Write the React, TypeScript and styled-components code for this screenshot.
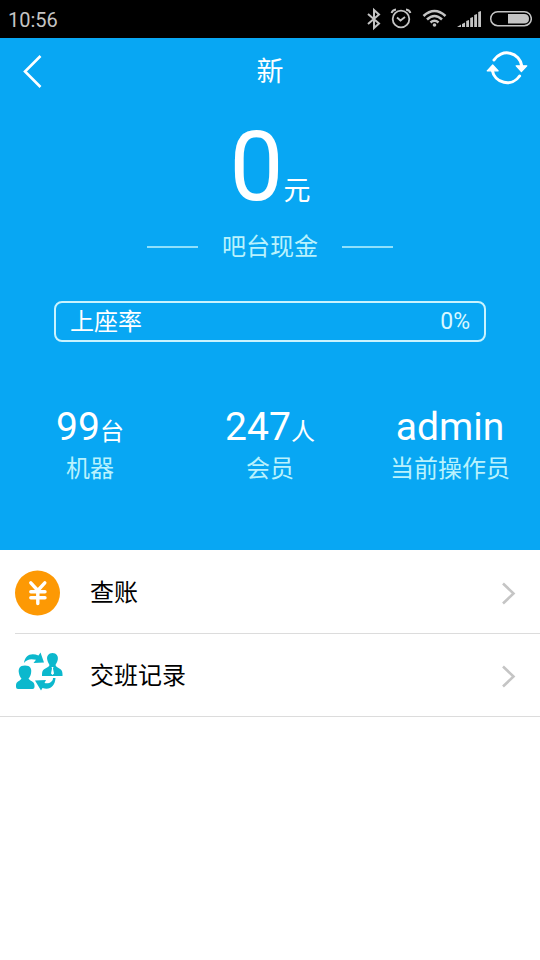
import React from "react";
import styled, { createGlobalStyle } from "styled-components";

const GlobalStyle = createGlobalStyle`
  * { box-sizing: border-box; }
  body {
    margin: 0;
    background: #fff;
    font-family: Roboto, "Noto Sans CJK SC", sans-serif;
  }
`;

const Page = styled.div`
  min-height: 100vh;
  background: #fff;
`;

const StatusBar = styled.div`
  display: flex;
  align-items: center;
  justify-content: space-between;
  height: 38px;
  padding: 2px 8px 0;
  background: #000;
  color: #c4c4c4;
  font-size: 20px;
  line-height: 24px;
`;

const StatusIcons = styled.svg`
  display: block;
`;

const Hero = styled.section`
  padding-bottom: 63px;
  background: #08a7f3;
  color: #fff;
`;

const TitleBar = styled.header`
  display: grid;
  grid-template-columns: 64px 1fr 64px;
  align-items: center;
  height: 64px;
`;

const Title = styled.h1`
  margin: 0;
  padding-top: 4px;
  text-align: center;
  font-size: 27px;
  font-weight: 400;
  line-height: 40px;
`;

const IconButton = styled.button`
  display: flex;
  align-items: center;
  justify-content: center;
  height: 64px;
  padding: 0;
  border: 0;
  background: none;
  color: #fff;
  cursor: pointer;
`;

const Amount = styled.div`
  display: flex;
  align-items: baseline;
  justify-content: center;
  height: 112px;
  margin-top: 9px;
  font-size: 96px;
  line-height: 112px;
`;

const AmountUnit = styled.span`
  font-size: 27px;
  line-height: 32px;
`;

const Caption = styled.div`
  display: flex;
  align-items: center;
  justify-content: center;
  gap: 24px;
  margin-top: 8px;
  color: #b9f2fd;
  font-size: 24px;
  line-height: 32px;

  &::before,
  &::after {
    content: "";
    width: 51px;
    height: 2px;
    background: #8fe0fb;
  }
`;

const Rate = styled.div`
  display: flex;
  align-items: center;
  justify-content: space-between;
  height: 41px;
  margin: 38px 10% 0;
  padding: 0 14px;
  border: 2px solid #c9f3fe;
  border-radius: 8px;
  font-size: 24px;
  line-height: 32px;
`;

const RateValue = styled.span`
  color: #d9f8ff;
  font-size: 23px;
`;

const Stats = styled.div`
  display: grid;
  grid-template-columns: repeat(3, 1fr);
  margin-top: 61px;
  text-align: center;
`;

const StatValue = styled.div`
  display: flex;
  align-items: baseline;
  justify-content: center;
  height: 48px;
  font-size: 39px;
  line-height: 48px;
`;

const StatUnit = styled.span`
  font-size: 24px;
  line-height: 32px;
`;

const StatLabel = styled.div`
  color: #b9f2fd;
  font-size: 24px;
  line-height: 36px;
`;

const Menu = styled.nav`
  border-bottom: 1px solid #dcdcdc;
`;

const MenuRow = styled.a`
  display: flex;
  align-items: center;
  height: 83px;
  margin-left: 15px;
  padding: 2px 24px 0 0;
  color: #000;
  font-size: 24px;
  line-height: 32px;
  text-decoration: none;

  & + & {
    border-top: 1px solid #dcdcdc;
  }
`;

const MenuIcon = styled.svg`
  flex: none;
  margin-right: 26px;
  overflow: visible;
`;

const MenuText = styled.span`
  flex: 1;
`;

function SystemIcons() {
  return (
    <StatusIcons width="166" height="28" viewBox="366 6 166 28" fill="none" stroke="#c4c4c4" aria-hidden="true">
      <path d="M368 14 L379 23.5 L374 28 V10 L379 14.5 L368 24" strokeWidth="2" />
      <circle cx="401" cy="19" r="8.3" strokeWidth="1.8" />
      <path d="M397 17.5 L400.5 20.5 L405 17" strokeWidth="1.8" />
      <path d="M391.5 13 Q392.5 10 396 9.5 M406 9.5 Q409.5 10 410.5 13" strokeWidth="1.8" />
      <path d="M423.5 16 Q434.5 6 445.5 16 M427 19.5 Q434.5 12.5 442 19.5 M430.5 22.5 Q434.5 19 438.5 22.5" strokeWidth="2.6" />
      <circle cx="434.5" cy="25" r="1.8" fill="#c4c4c4" stroke="none" />
      <path
        d="M457 27 L461 24.5 V27 Z M462 24 L465 22.5 V27 H462 Z M466.2 21 L469 20 V27 H466.2 Z M470.2 18 L473 17 V27 H470.2 Z M474.2 15 L477 14 V27 H474.2 Z M478.2 12 L481 11 V27 H478.2 Z"
        fill="#c4c4c4"
        stroke="none"
      />
      <rect x="490.7" y="11.7" width="40.6" height="14" rx="7" strokeWidth="1.5" />
      <path d="M508 14 H524 Q529 14 529 18.7 Q529 23.5 524 23.5 H508 Z" fill="#c4c4c4" stroke="none" />
    </StatusIcons>
  );
}

function BackIcon() {
  return (
    <svg width="20" height="36" viewBox="0 0 20 36" fill="none" stroke="currentColor" strokeWidth="2.6" aria-hidden="true">
      <path d="M18.5 4 L3 19.5 L18.5 35" />
    </svg>
  );
}

function RefreshIcon() {
  return (
    <svg width="44" height="40" viewBox="486 50 44 40" fill="none" stroke="currentColor" strokeWidth="3" aria-hidden="true">
      <path d="M494 60 A15.1 15.1 0 0 1 521.8 66" strokeLinecap="round" />
      <path d="M519.6 76 A15.1 15.1 0 0 1 492.2 70" strokeLinecap="round" />
      <path
        d="M516.2 65.8 H526.8 L521.4 71.5 Z M487.2 70.8 H498.2 L492.7 65 Z"
        fill="currentColor"
        strokeWidth="1.2"
        strokeLinejoin="round"
      />
    </svg>
  );
}

function YuanIcon() {
  return (
    <MenuIcon width="49" height="46" viewBox="0 0 49 46" fill="none" aria-hidden="true">
      <circle cx="22.5" cy="23" r="22.5" fill="#fd9904" />
      <path
        d="M15.8 12.8 L22.8 20.5 L29.8 12.8 M15.8 21.7 H30 M15.8 27.7 H30 M22.8 21 V33.5"
        stroke="#fff"
        strokeWidth="3.4"
        strokeLinecap="round"
        strokeLinejoin="round"
      />
    </MenuIcon>
  );
}

function ShiftIcon() {
  return (
    <MenuIcon width="49" height="46" viewBox="15 653 49 46" fill="#0cb8cd" aria-hidden="true">
      <path d="M25 665.5 C19.5 665.500 18 669 19 673.5 C19.5 676 20.5 677.5 21.5 678.5 C20.5 681 16 681 16 685.5 V687 Q16 689 18 689 H32.5 Q34.5 689 34.5 687 V685.5 C34.5 681 29.5 681 28.5 678.5 C29.5 677.5 30.5 676 31 673.5 C32 669 30.5 665.5 25 665.5 Z" />
      <path d="M52.5 653 C48.5 653 46.6 656 47.2 659.5 C47.6 662 49 664 49.5 665 C48.5 669 42 667 42 674 V676 H62.5 V674 C62.5 667 56.5 669 55.5 665 C56 664 57.4 662 57.8 659.5 C58.4 656 56.5 653 52.5 653 Z" />
      <path d="M51.5 667 H53.5 L53 668.5 L54 673.5 L52.5 675 L51 673.5 L52 668.5 Z" fill="#fff" />
      <path d="M24 663 C25 655 31 652.5 38.5 655.5 L40.5 652.5 L44 662.5 L33.5 663 L36 659.8 C31 658.5 27 659 24 663 Z" />
      <path d="M55.5 678 C55 686 50 690.5 42.5 688 L41 690.5 L35 680.5 L46 680 L44.5 683 C49 684 53 682 53 678 Z" />
    </MenuIcon>
  );
}

function ChevronIcon() {
  return (
    <svg width="14" height="24" viewBox="0 0 14 24" fill="none" stroke="#c5c5c5" strokeWidth="2.6" aria-hidden="true">
      <path d="M1 2.5 L11.5 12.5 L1 22.5" />
    </svg>
  );
}

const stats = [
  { value: "99", unit: "台", label: "机器" },
  { value: "247", unit: "人", label: "会员" },
  { value: "admin", unit: "", label: "当前操作员" },
];

const menu = [
  { text: "查账", icon: <YuanIcon /> },
  { text: "交班记录", icon: <ShiftIcon /> },
];

export default function App() {
  return (
    <Page>
      <GlobalStyle />
      <StatusBar>
        <span>10:56</span>
        <SystemIcons />
      </StatusBar>
      <Hero>
        <TitleBar>
          <IconButton type="button" aria-label="返回">
            <BackIcon />
          </IconButton>
          <Title>新</Title>
          <IconButton type="button" aria-label="刷新">
            <RefreshIcon />
          </IconButton>
        </TitleBar>
        <Amount>
          0<AmountUnit>元</AmountUnit>
        </Amount>
        <Caption>吧台现金</Caption>
        <Rate>
          <span>上座率</span>
          <RateValue>0%</RateValue>
        </Rate>
        <Stats>
          {stats.map((s) => (
            <div key={s.label}>
              <StatValue>
                {s.value}
                {s.unit && <StatUnit>{s.unit}</StatUnit>}
              </StatValue>
              <StatLabel>{s.label}</StatLabel>
            </div>
          ))}
        </Stats>
      </Hero>
      <Menu>
        {menu.map((m) => (
          <MenuRow key={m.text} href="#">
            {m.icon}
            <MenuText>{m.text}</MenuText>
            <ChevronIcon />
          </MenuRow>
        ))}
      </Menu>
    </Page>
  );
}
